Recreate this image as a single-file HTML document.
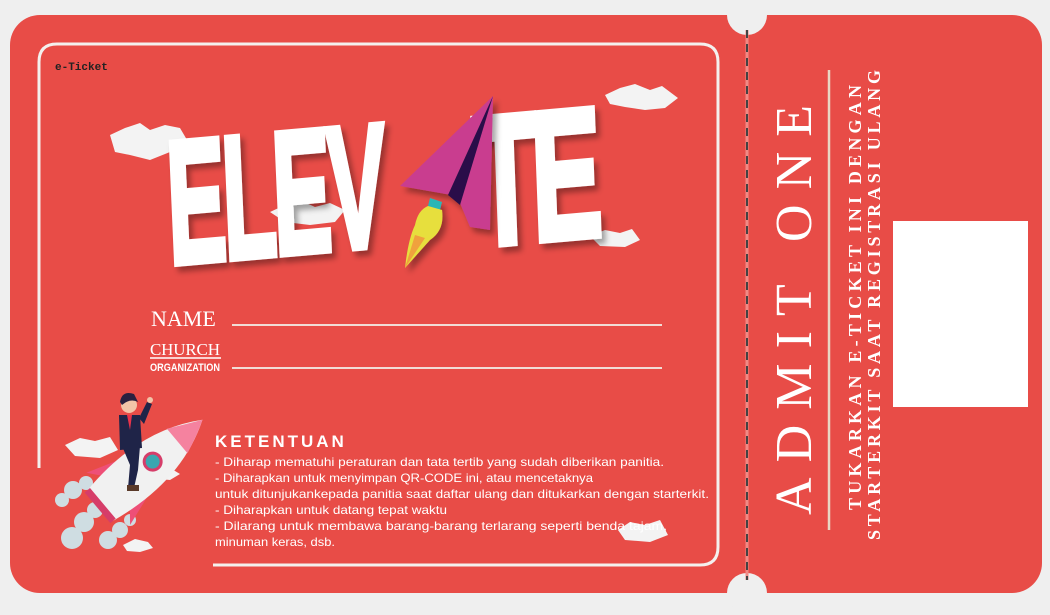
<!DOCTYPE html>
<html><head><meta charset="utf-8"><style>
html,body{margin:0;padding:0;background:#efefef;width:1050px;height:615px;overflow:hidden;}
svg{display:block}
</style></head><body>
<svg width="1050" height="615" viewBox="0 0 1050 615" xmlns="http://www.w3.org/2000/svg">
<defs>
<filter id="sh" x="-10%" y="-10%" width="130%" height="130%"><feDropShadow dx="4" dy="5" stdDeviation="3" flood-color="#000" flood-opacity="0.35"/></filter>
</defs>
<rect x="10" y="15" width="1032" height="578" rx="30" fill="#e84c47"/>
<circle cx="747" cy="15" r="20" fill="#efefef"/>
<circle cx="747" cy="593" r="20" fill="#efefef"/>
<line x1="747" y1="30" x2="747" y2="580" stroke="#f08a85" stroke-width="3"/>
<line x1="747" y1="30" x2="747" y2="580" stroke="#444" stroke-width="2" stroke-dasharray="8,6"/>
<path d="M39 468 V62 Q39 44 57 44 H700 Q718 44 718 62 V547 Q718 565 700 565 H213" fill="none" stroke="#f4f0ee" stroke-width="3"/>
<text x="55" y="70" font-family="Liberation Mono, monospace" font-size="11" font-weight="bold" fill="#222">e-Ticket</text>
<g fill="#f3f3f3">
<path d="M110 135 L125 128 L140 123 L150 130 L165 125 L180 128 L190 145 L170 152 L150 160 L130 155 L115 152 Z"/>
<path d="M605 95 L620 88 L635 84 L650 90 L662 86 L678 98 L665 108 L645 110 L625 107 L610 104 Z"/>
<path d="M270 212 L285 205 L300 200 L315 207 L330 203 L345 210 L335 222 L310 225 L285 222 Z"/>
<path d="M590 236 L605 230 L620 233 L632 229 L640 240 L625 247 L600 246 Z"/>
<path d="M618 530 L630 522 L645 525 L660 520 L668 535 L650 542 L625 540 Z"/>
<path d="M65 445 L80 438 L95 441 L110 437 L118 450 L100 458 L75 456 Z"/>
<path d="M145 470 L158 464 L170 468 L180 474 L170 480 L150 478 Z"/>
<path d="M123 545 L135 539 L148 542 L153 548 L140 552 L127 551 Z"/>
</g>
<g filter="url(#sh)" fill="#fff" stroke="#fff" stroke-width="7" stroke-linejoin="miter" font-family="Liberation Sans, sans-serif" font-weight="bold">
<text transform="translate(170,264) rotate(-5) scale(0.5,1) skewX(-5)" font-size="175" letter-spacing="-6">ELEV</text>
<text transform="translate(476,246) rotate(-5) scale(0.6,1.05) skewX(-5)" font-size="175" letter-spacing="-10">TE</text>
</g>
<g filter="url(#sh)">
<path d="M493 96 L400 186 L457 196 Z" fill="#c93e8f"/>
<path d="M493 96 L457 196 L470 227 L490 230 Z" fill="#c93e8f"/>
<path d="M493 96 L448 195 L460 205 Z" fill="#2a1148"/>
<path d="M430 198 L442 202 L440 210 L428 206 Z" fill="#2bb6b6"/>
<path d="M428 206 L442 210 Q445 230 430 240 L405 268 Q408 240 415 225 Q418 210 428 206 Z" fill="#e7df3e"/>
<path d="M415 235 L425 238 L405 268 Z" fill="#f0a13c"/>
</g>
<g font-family="Liberation Serif, serif" fill="#fff">
<text x="151" y="326" font-size="22">NAME</text>
<text x="150" y="355" font-size="17" textLength="70">CHURCH</text>
</g>
<line x1="150" y1="358" x2="221" y2="358" stroke="#fff" stroke-width="1.5"/>
<text x="150" y="371" font-family="Liberation Sans, sans-serif" font-weight="bold" font-size="11" fill="#fff" textLength="70" lengthAdjust="spacingAndGlyphs">ORGANIZATION</text>
<line x1="232" y1="325" x2="662" y2="325" stroke="#f1dcd6" stroke-width="2"/>
<line x1="232" y1="368" x2="662" y2="368" stroke="#f1dcd6" stroke-width="2"/>
<g fill="#cfdde2">
<circle cx="72" cy="538" r="11"/><circle cx="84" cy="522" r="10"/><circle cx="95" cy="510" r="8"/><circle cx="103" cy="500" r="6"/>
<circle cx="62" cy="500" r="7"/><circle cx="73" cy="490" r="9"/><circle cx="86" cy="483" r="7"/>
<circle cx="108" cy="540" r="9"/><circle cx="120" cy="530" r="8"/><circle cx="130" cy="520" r="6"/>
</g>
<g transform="translate(145,468) rotate(-40)">
<path d="M-30 -12 L-48 -34 L-18 -24 Z" fill="#ee4f77"/>
<path d="M-30 12 L-48 34 L-18 24 Z" fill="#ee4f77"/>
<path d="M-58 -20 Q20 -34 75 0 Q20 34 -58 20 Z" fill="#f1f1f1"/>
<path d="M42 -16 Q62 -6 75 0 Q62 8 42 16 Z" fill="#f5829f"/>
<rect x="-62" y="-20" width="7" height="40" fill="#d63d69"/>
<circle cx="10" cy="0" r="10" fill="#d63d69"/><circle cx="10" cy="0" r="7" fill="#3aa7b0"/>
</g>
<g>
<circle cx="129" cy="405" r="8" fill="#f2c4a8"/>
<path d="M120 402 Q122 390 134 394 L138 402 Q130 398 122 405 Z" fill="#2a2040"/>
<path d="M119 415 L140 415 L142 448 L120 450 Z" fill="#1f2448"/>
<path d="M127 415 L132 415 L130 430 Z" fill="#e8334a"/>
<path d="M139 418 L147 402 L152 404 L144 424 Z" fill="#1f2448"/>
<circle cx="150" cy="400" r="3" fill="#f2c4a8"/>
<path d="M122 446 L140 446 L138 470 L134 488 L128 488 L130 465 Z" fill="#1f2448"/>
<rect x="127" y="485" width="12" height="6" fill="#5a3a2a"/>
</g>
<text x="215" y="447" font-family="Liberation Sans, sans-serif" font-weight="bold" font-size="17" letter-spacing="3" fill="#fff">KETENTUAN</text>
<g font-family="Liberation Sans, sans-serif" font-size="12" fill="#fff" lengthAdjust="spacingAndGlyphs">
<text x="215" y="466" textLength="449" lengthAdjust="spacingAndGlyphs">- Diharap mematuhi peraturan dan tata tertib yang sudah diberikan panitia.</text>
<text x="215" y="482" textLength="378" lengthAdjust="spacingAndGlyphs">- Diharapkan untuk menyimpan QR-CODE ini, atau mencetaknya</text>
<text x="215" y="498" textLength="494" lengthAdjust="spacingAndGlyphs">untuk ditunjukankepada panitia saat daftar ulang dan ditukarkan dengan starterkit.</text>
<text x="215" y="514" textLength="232" lengthAdjust="spacingAndGlyphs">- Diharapkan untuk datang tepat waktu</text>
<text x="215" y="530" textLength="452" lengthAdjust="spacingAndGlyphs">- Dilarang untuk membawa barang-barang terlarang seperti benda tajam,</text>
<text x="215" y="546" textLength="120" lengthAdjust="spacingAndGlyphs">minuman keras, dsb.</text>
</g>
<text transform="translate(811,515) rotate(-90)" font-family="Liberation Serif, serif" font-size="52" fill="#fff" textLength="410" lengthAdjust="spacing">ADMIT ONE</text>
<line x1="829" y1="70" x2="829" y2="530" stroke="#e9d6c4" stroke-width="2.5"/>
<g font-family="Liberation Serif, serif" font-weight="bold" font-size="18" fill="#fff">
<text transform="translate(861,510) rotate(-90)" textLength="425" lengthAdjust="spacing">TUKARKAN E-TICKET INI DENGAN</text>
<text transform="translate(880,540) rotate(-90)" textLength="470" lengthAdjust="spacing">STARTERKIT SAAT REGISTRASI ULANG</text>
</g>
<rect x="893" y="221" width="135" height="186" fill="#fff"/>
</svg>
</body></html>
